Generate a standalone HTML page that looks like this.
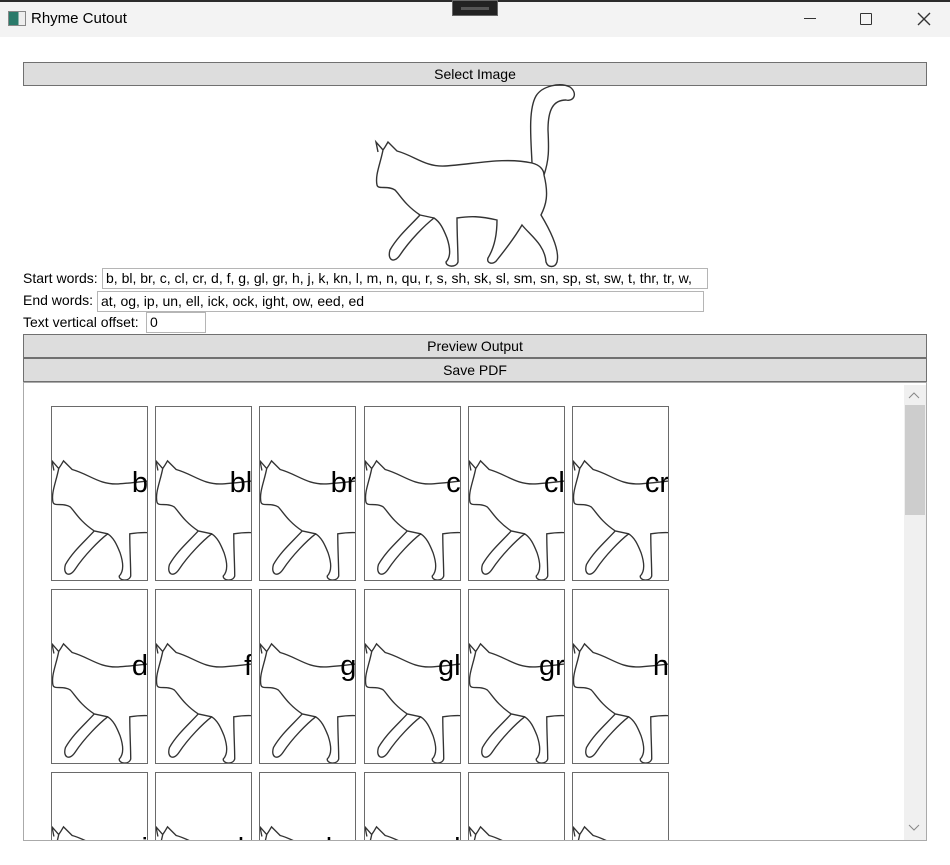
<!DOCTYPE html>
<html style="overflow:hidden;width:950px;height:865px"><head><meta charset="utf-8"><style>
*{margin:0;padding:0;box-sizing:border-box}
body{width:950px;height:865px;background:#fff;position:relative;overflow:hidden;font-family:"Liberation Sans",sans-serif;font-size:14px;color:#000}
.abs{position:absolute}
.title{left:0;top:0;width:950px;height:37px;background:#f3f3f3;border-top:2px solid #2b2b2b}
.btn{position:absolute;left:23px;width:904px;height:24px;background:#dddddd;border:1px solid #707070;text-align:center;line-height:22px}
.inp{position:absolute;height:21px;border:1px solid #b5b5b5;background:#fff;padding-left:3px;line-height:19px;white-space:nowrap;overflow:hidden}
.lbl{position:absolute;left:23px;line-height:20px}
.card{position:absolute;width:97px;height:175px;border:1px solid #6a6a6a;background:#fff;overflow:hidden}
.card svg{position:absolute;left:0;top:0}
.card span{position:absolute;right:-1px;top:56px;font-size:29px;line-height:40px}
</style></head><body>
<div class="abs title"></div>
<div class="abs" style="left:452px;top:0;width:46px;height:16px;background:#222;border:1px solid #666"></div>
<div class="abs" style="left:461px;top:7px;width:28px;height:3px;background:#555"></div>
<div class="abs" style="left:8px;top:11px;width:18px;height:15px;border:1px solid #888;background:linear-gradient(90deg,#2a7a6a 0 60%,#eee 60%)"></div>
<div class="abs" style="left:31px;top:10px;font-size:15px">Rhyme Cutout</div>
<div class="abs" style="left:804px;top:18px;width:12px;height:1px;background:#333"></div>
<div class="abs" style="left:860px;top:13px;width:12px;height:12px;border:1.5px solid #333;border-radius:1px"></div>
<svg class="abs" style="left:917px;top:12px" width="14" height="14"><path d="M1 1L13 13M13 1L1 13" stroke="#333" stroke-width="1.4"/></svg>

<div class="btn" style="top:62px">Select Image</div>
<svg class="abs" style="left:0;top:0" width="950" height="300">
<defs><path id="cat" fill="none" stroke="#333" stroke-width="1.4" d="M383,150 L376,142 L378,152 M383,150 L385,147 L388,142 L397,151 C415,156 425,167 445,166 C475,164 505,157 532,163 C531,140 528,110 536,96 C542,86 560,82 570,87 C578,93 574,102 566,100 C553,100 548,110 548,130 C549,150 549,160 544,175 C549,195 546,205 541,215 C550,230 560,250 557,262 C555,268 548,268 546,262 C545,245 530,235 522,225 C515,237 505,250 497,260 C494,265 486,264 488,258 C496,245 497,230 497,220 C480,216 470,216 457,218 C457,235 458,250 458,262 C456,268 446,267 446,262 C450,258 451,250 447,238 C443,228 440,222 434,218 C425,225 410,240 400,255 C394,264 387,260 390,250 C398,236 410,226 420,215 C405,205 400,195 395,190 C388,185 378,190 377,185 C375,175 380,165 383,150 Z M532,163 C540,165 544,170 544,175 M420,215 L434,218"/></defs>
<use href="#cat"/>
</svg>

<div class="lbl" style="top:268px">Start words:</div>
<div class="inp" style="left:102px;top:268px;width:606px">b, bl, br, c, cl, cr, d, f, g, gl, gr, h, j, k, kn, l, m, n, qu, r, s, sh, sk, sl, sm, sn, sp, st, sw, t, thr, tr, w,</div>
<div class="lbl" style="top:290px">End words:</div>
<div class="inp" style="left:97px;top:291px;width:607px">at, og, ip, un, ell, ick, ock, ight, ow, eed, ed</div>
<div class="lbl" style="top:312px">Text vertical offset:</div>
<div class="inp" style="left:146px;top:312px;width:60px">0</div>
<div class="btn" style="top:334px">Preview Output</div>
<div class="btn" style="top:358px">Save PDF</div>

<div class="abs" style="left:23px;top:382px;width:904px;height:459px;border:1px solid #aaa;overflow:hidden;background:#fff">
<div class="abs" style="left:880px;top:2px;width:22px;height:455px;background:#f0f0f0"></div>
<div class="abs" style="left:881px;top:22px;width:20px;height:110px;background:#cdcdcd"></div>
<svg class="abs" style="left:884px;top:8px" width="12" height="8"><path d="M1 7L6 2L11 7" fill="none" stroke="#888"/></svg>
<svg class="abs" style="left:884px;top:441px" width="12" height="8"><path d="M1 1L6 6L11 1" fill="none" stroke="#888"/></svg>
<div id="grid"></div>
</div>
<script>
var L=["b","bl","br","c","cl","cr","d","f","g","gl","gr","h","j","k","kn","l","m","n"];
var h="";
for(var i=0;i<18;i++){var c=i%6,r=Math.floor(i/6);
h+='<div class="card" style="left:'+(27+c*104.2)+'px;top:'+(23+r*183)+'px"><svg width="96" height="174" viewBox="376 86 100 181"><use href="#cat"/></svg><span>'+L[i]+'</span></div>';}
document.getElementById("grid").innerHTML=h;
</script>
</body></html>
